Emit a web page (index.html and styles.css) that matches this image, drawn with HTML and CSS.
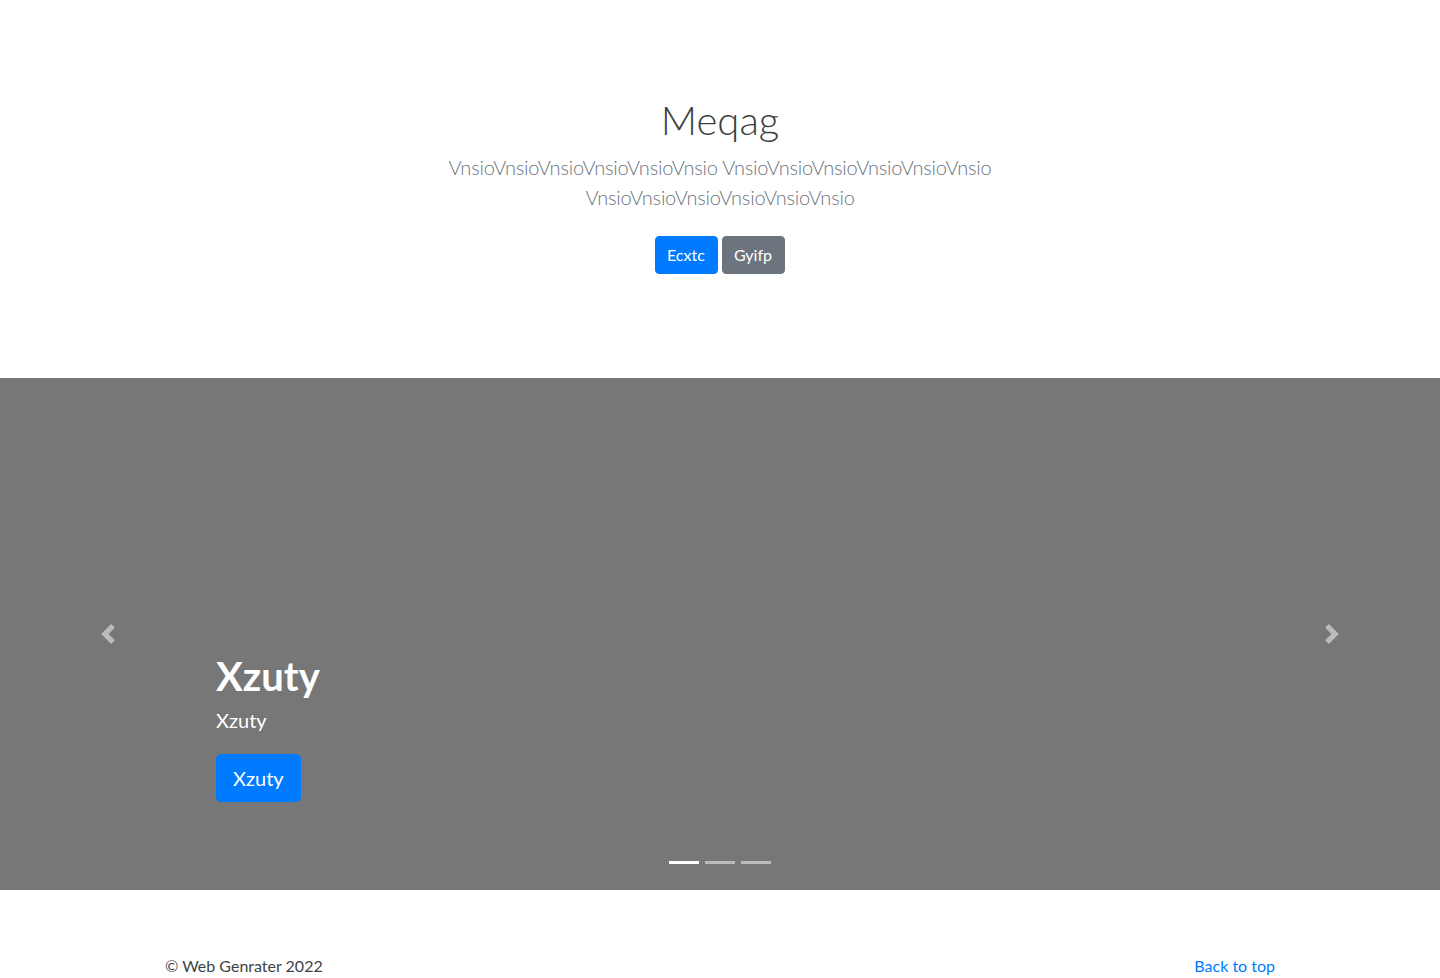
FILE: index.html
```html
<!DOCTYPE html>
<html lang="en">
<head>
<meta charset="utf-8">
<title>Meqag</title>
<link rel="stylesheet" href="styles.css">
</head>
<body>
<main>
  <section class="hero">
    <div class="hero-inner">
      <h1 class="hero-title">Meqag</h1>
      <p class="lead">VnsioVnsioVnsioVnsioVnsioVnsio VnsioVnsioVnsioVnsioVnsioVnsio VnsioVnsioVnsioVnsioVnsioVnsio</p>
      <p class="hero-actions">
        <a href="#" class="btn btn-primary">Ecxtc</a>
        <a href="#" class="btn btn-secondary">Gyifp</a>
      </p>
    </div>
  </section>

  <div class="carousel">
    <ol class="indicators">
      <li class="active"></li>
      <li></li>
      <li></li>
    </ol>
    <div class="slide">
      <div class="caption">
        <h1 class="caption-title">Xzuty</h1>
        <p class="caption-text">Xzuty</p>
        <p class="caption-actions"><a href="#" class="btn btn-primary btn-lg">Xzuty</a></p>
      </div>
    </div>
    <a class="control control-prev" href="#">
      <svg class="control-icon" viewBox="0 0 8 8" fill="#fff"><path d="M5.25 0l-4 4 4 4 1.5-1.5-2.5-2.5 2.5-2.5-1.5-1.5z"/></svg>
    </a>
    <a class="control control-next" href="#">
      <svg class="control-icon" viewBox="0 0 8 8" fill="#fff"><path d="M2.75 0l-1.5 1.5 2.5 2.5-2.5 2.5 1.5 1.5 4-4-4-4z"/></svg>
    </a>
  </div>

  <footer class="footer">
    <p class="back-top"><a href="#">Back to top</a></p>
    <p class="copy">© Web Genrater 2022</p>
  </footer>
</main>
</body>
</html>
```

FILE: styles.css
```css
* { box-sizing: border-box; }

body {
  margin: 0;
  font-family: Lato, "Open Sans", "Liberation Sans", sans-serif;
  font-size: 16px;
  line-height: 1.5;
  color: #212529;
  background: #fff;
}

a { color: #007bff; text-decoration: none; }

.hero {
  padding: 96px 0;
  text-align: center;
}

.hero-inner {
  max-width: 640px;
  margin: 0 auto;
  padding: 0 15px;
}

.hero-title {
  margin: 0 0 8px;
  font-size: 40px;
  font-weight: 300;
  line-height: 1.2;
  color: #3a3f44;
}

.lead {
  margin: 0 0 16px;
  font-size: 20px;
  font-weight: 300;
  letter-spacing: -0.22px;
  color: #6c757d;
}

.hero-actions { margin: 0; }

.btn {
  display: inline-block;
  padding: 6px 12px;
  font-size: 16px;
  line-height: 1.5;
  font-weight: 400;
  border: 1px solid transparent;
  border-radius: 4px;
  color: #fff;
  vertical-align: middle;
}

.hero-actions .btn { margin: 8px 0; padding: 6px 12px 6px 11px; }

.btn-primary { background: #007bff; border-color: #007bff; }
.btn-secondary { background: #6c757d; border-color: #6c757d; }

.btn-lg {
  padding: 8px 16px;
  font-size: 20px;
  border-radius: 4.8px;
}

.carousel {
  position: relative;
  height: 512px;
  margin-bottom: 64px;
  background: #777;
}

.slide { height: 100%; }

.caption {
  position: absolute;
  left: 15%;
  right: 15%;
  bottom: 52px;
  padding: 20px 0;
  color: #fff;
  text-align: left;
  z-index: 10;
}

.caption-title {
  margin: 0 0 5px;
  font-size: 40px;
  font-weight: 700;
  line-height: 1.2;
}

.caption-text {
  margin: 0 0 19px;
  font-size: 20px;
}

.caption-actions { margin: 0 0 16px; }

.control {
  position: absolute;
  top: 0;
  bottom: 0;
  width: 15%;
  display: flex;
  align-items: center;
  justify-content: center;
  opacity: 0.5;
  z-index: 5;
}

.control-prev { left: 0; }
.control-next { right: 0; }

.control-icon { width: 20px; height: 20px; }

.indicators {
  position: absolute;
  left: 0;
  right: 0;
  bottom: 0;
  z-index: 15;
  display: flex;
  justify-content: center;
  margin: 0 15% 16px;
  padding: 0;
  list-style: none;
}

.indicators li {
  box-sizing: content-box;
  width: 30px;
  height: 3px;
  margin: 0 3px;
  border-top: 10px solid transparent;
  border-bottom: 10px solid transparent;
  background-color: #fff;
  background-clip: padding-box;
  opacity: 0.5;
}

.indicators li.active { opacity: 1; }

.footer {
  max-width: 1140px;
  margin: 0 auto;
  padding: 0 15px;
  color: #3d4348;
}

.footer p { margin: 0 0 16px; }

.back-top { float: right; }
```
